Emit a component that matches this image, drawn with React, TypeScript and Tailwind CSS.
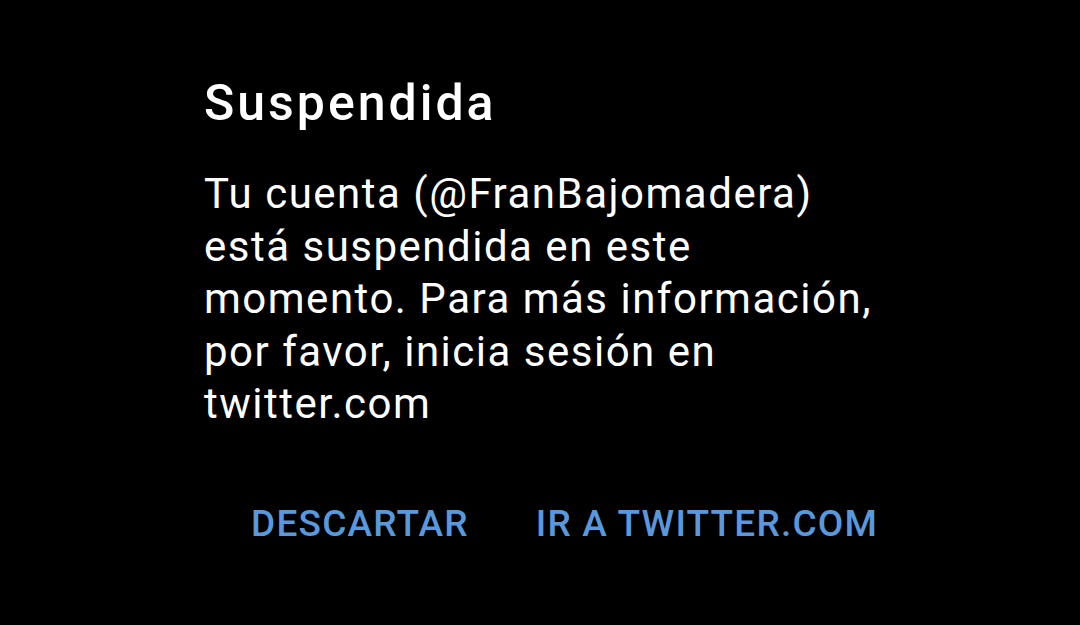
export default function App() {
  return (
    <div
      className="w-[1080px] h-[625px] bg-black overflow-hidden"
      style={{ fontFamily: 'Roboto, "Noto Sans", sans-serif' }}
    >
      <div className="w-[878px] pl-[204px] pt-[75px]">
        {/* Title */}
        <h1 className="text-[50px] leading-[56px] font-medium tracking-[3px] text-white">Suspendida</h1>

        {/* Message */}
        <p className="mt-[37px] text-[42px] leading-[52.5px] tracking-[1.5px] text-white">
          Tu cuenta (@FranBajomadera) está suspendida en este momento. Para más información, por favor, inicia sesión en twitter.com
        </p>

        {/* Actions */}
        <div className="mt-[71px] flex justify-end gap-[67px]">
          <button className="text-[37px] leading-[44px] font-medium uppercase tracking-[1.2px] text-[#5a98dc]">Descartar</button>
          <button className="text-[37px] leading-[44px] font-medium uppercase tracking-[1.2px] text-[#5a98dc]">Ir a twitter.com</button>
        </div>
      </div>
    </div>
  )
}
